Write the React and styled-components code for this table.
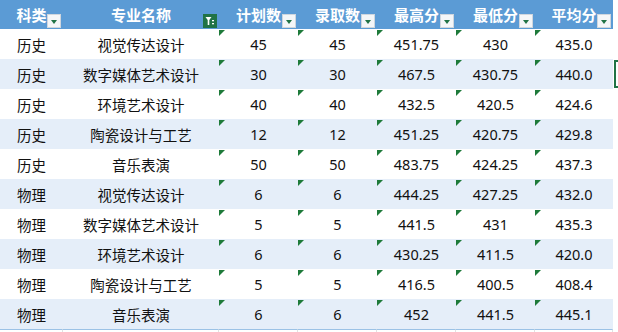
import styled, { createGlobalStyle } from "styled-components";

const GlobalStyle = createGlobalStyle`
  html, body {
    margin: 0;
    padding: 0;
    background: #fff;
  }
  body {
    font-family: "Noto Sans", "Noto Sans CJK SC", sans-serif;
  }
`;

const columns = ["科类", "专业名称", "计划数", "录取数", "最高分", "最低分", "平均分"];

const rows = [
  ["历史", "视觉传达设计", "45", "45", "451.75", "430", "435.0"],
  ["历史", "数字媒体艺术设计", "30", "30", "467.5", "430.75", "440.0"],
  ["历史", "环境艺术设计", "40", "40", "432.5", "420.5", "424.6"],
  ["历史", "陶瓷设计与工艺", "12", "12", "451.25", "420.75", "429.8"],
  ["历史", "音乐表演", "50", "50", "483.75", "424.25", "437.3"],
  ["物理", "视觉传达设计", "6", "6", "444.25", "427.25", "432.0"],
  ["物理", "数字媒体艺术设计", "5", "5", "441.5", "431", "435.3"],
  ["物理", "环境艺术设计", "6", "6", "430.25", "411.5", "420.0"],
  ["物理", "陶瓷设计与工艺", "5", "5", "416.5", "400.5", "408.4"],
  ["物理", "音乐表演", "6", "6", "452", "441.5", "445.1"],
];

// 2번째 열(专业名称)만 필터가 걸려 있음
const FunnelIcon = () => (
  <svg width="10" height="10" viewBox="0 0 10 10">
    <path d="M0.5 1 H6.5 L4.3 4 V9 H2.7 V4 Z" fill="#fff" />
    <rect x="7" y="4" width="2" height="1.3" fill="#fff" />
    <rect x="7" y="7" width="2" height="1.3" fill="#fff" />
  </svg>
);

const App = () => {
  return (
    <>
      <GlobalStyle />
      <Sheet>
        {columns.map((name, i) => (
          <HeaderCell key={name}>
            {name}
            <FilterButton $active={i === 1}>
              {i === 1 ? <FunnelIcon /> : <DownArrow />}
            </FilterButton>
          </HeaderCell>
        ))}
        <SideCell />

        {rows.map((row, r) => (
          <Row key={r}>
            {row.map((value, c) => (
              <Cell key={c} $striped={r % 2 === 1} $flag={c >= 2}>
                {value}
              </Cell>
            ))}
            <SideCell>{r === 1 && <Cursor />}</SideCell>
          </Row>
        ))}

        {columns.map((name) => (
          <GridTail key={name} />
        ))}
        <SideCell />
      </Sheet>
    </>
  );
};

export default App;

const Sheet = styled.div`
  display: grid;
  grid-template-columns: 63px 156px 79px 79px 79px 79px 78px 5px;
  grid-template-rows: 29px repeat(10, 30px) 3px;
  color: #111;
`;

const Row = styled.div`
  display: contents;
`;

const HeaderCell = styled.div`
  position: relative;
  display: flex;
  align-items: center;
  justify-content: center;
  padding-bottom: 1px;
  background-color: #5b9bd5;
  color: #fff;
  font-family: "Noto Sans CJK SC", sans-serif;
  font-size: 15px;
  font-weight: bold;
`;

const FilterButton = styled.span`
  position: absolute;
  right: 2px;
  bottom: 1px;
  width: 14px;
  height: 14px;
  box-sizing: border-box;
  display: flex;
  align-items: center;
  justify-content: center;
  background-color: ${(p) => (p.$active ? "#217346" : "#f4f6f8")};
  border: 1px solid ${(p) => (p.$active ? "#217346" : "#cfd6de")};
`;

const DownArrow = styled.span`
  margin-top: 2px;
  width: 0;
  height: 0;
  border-left: 3.5px solid transparent;
  border-right: 3.5px solid transparent;
  border-top: 4px solid #217346;
`;

const Cell = styled.div`
  position: relative;
  display: flex;
  align-items: center;
  justify-content: center;
  background-color: ${(p) => (p.$striped ? "#e5eef9" : "#fff")};
  font-size: 14.5px;

  &::before {
    content: "";
    display: ${(p) => (p.$flag ? "block" : "none")};
    position: absolute;
    left: 0;
    top: 1px;
    width: 0;
    height: 0;
    border-top: 6px solid #1e7a3a;
    border-right: 6px solid transparent;
  }
`;

const SideCell = styled.div`
  display: flex;
  align-items: stretch;
  background-color: #fff;
  padding: 1px 0;
`;

const Cursor = styled.div`
  flex: 1;
  margin-left: 1px;
  border: 2px solid #217346;
  border-right: none;
`;

const GridTail = styled.div`
  box-sizing: border-box;
  border-top: 1px solid #9bc2e6;
  border-right: 1px solid #e1e1e1;
`;
